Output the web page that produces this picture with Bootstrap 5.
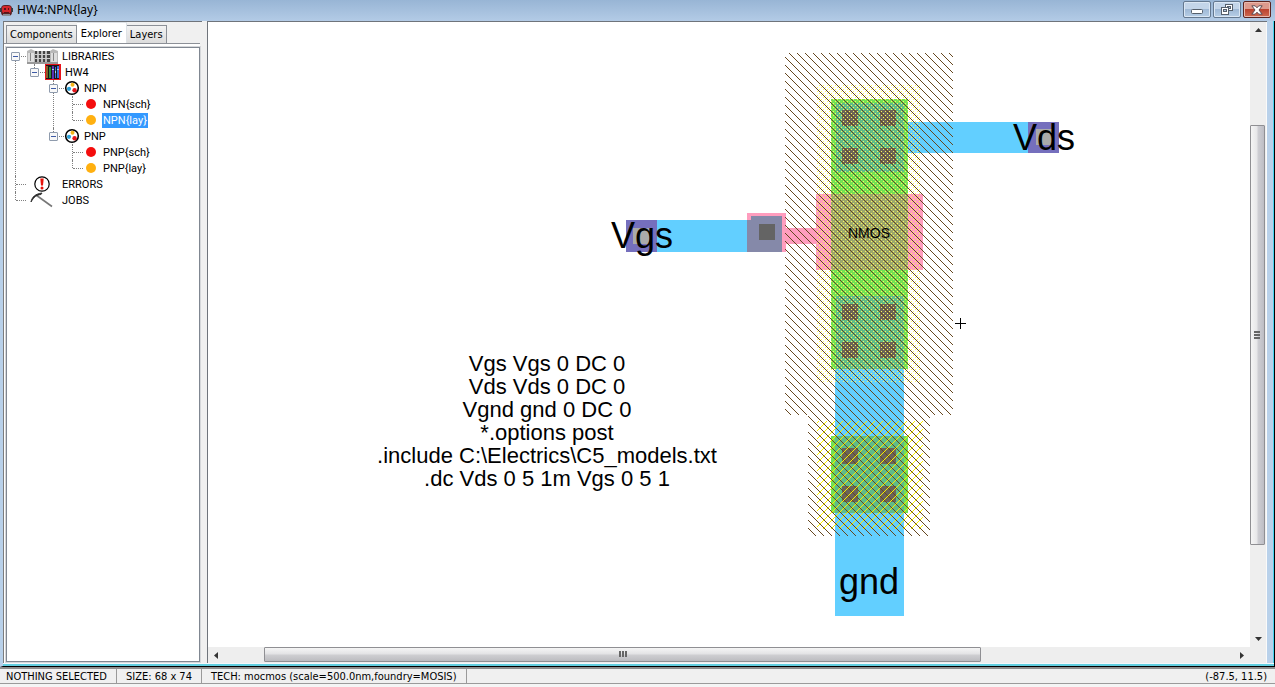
<!DOCTYPE html>
<html lang="en">
<head>
<meta charset="utf-8">
<meta name="viewport" content="width=device-width, initial-scale=1">
<title>HW4:NPN{lay}</title>
<link href="https://cdn.jsdelivr.net/npm/bootstrap@5.3.0/dist/css/bootstrap.min.css" rel="stylesheet">
<style>
  :root { --ui: "DejaVu Sans Condensed", "DejaVu Sans", sans-serif; --face: #f0f0f0; --edge: #808791; }
  body { font: 11px/16px var(--ui); color: #000; background: #fff; }
  button { color: inherit; font: inherit; }
  .fit { min-height: 0; min-width: 0; }

  .titlebar { height: 21px; background: linear-gradient(#98b5d5, #b3cbe6); }
  .titlebar h1 { font: 12px/20px "Noto Sans", sans-serif; }
  .win-btns { gap: 2px; padding-top: 1px; }
  .win-btn { width: 28px; height: 17px; border: 1px solid #64788f; border-radius: 2px; background: linear-gradient(#c3d5e9 45%, #9fb9d6 50%, #b7cee6); box-shadow: inset 0 0 0 1px #dbe7f4; }
  .win-btn.close-win { border-color: #5b2420; background: linear-gradient(#dd9a8d 45%, #bb4330 50%, #cf6a50); box-shadow: inset 0 0 0 1px #e8b9ae; }

  .window-frame { border-left: 3px solid #b9d1ea; border-right: 1px solid #000; border-bottom: 1px solid #000; background: var(--face); }
  .frame-right { width: 7px; background: #b9d1ea; border-right: 1px solid #45d3ee; }
  .frame-bottom { height: 3px; background: #f4f8fb; border-bottom: 2px solid #62cfe0; }

  .side { width: 199px; border-left: 1px solid #7d7d7d; border-top: 1px solid #6f747b; }
  .side .nav-tabs { --bs-nav-tabs-border-width: 0; height: 21px; padding-left: 2px; }
  .side .nav-link { height: 18px; padding: 0 3px; line-height: 17px; color: #000; border: 1px solid #8c9097; border-bottom: 0; border-radius: 0; background: linear-gradient(#f3f3f3, #dcdcdc); margin: 0; }
  .side .nav-link + .nav-link { border-left: 0; }
  .side .nav-link.active { height: 21px; padding: 0 4px; line-height: 19px; color: #000; background: #fff; }
  .side-page { margin-right: 2px; padding: 3px 0 1px 2px; border-top: 1px solid #8c9097; background: #fff; }
  .tree-box { border: 1px solid var(--edge); outline: 1px solid #d5d7da; padding-left: 1px; }

  .tree { font-family: Roboto, "Liberation Sans", sans-serif; }
  .tree ul { margin-left: 19px; }
  .tree li { position: relative; }
  .tree li::before { content: ""; position: absolute; left: 7px; top: 0; bottom: 0; border-left: 1px dotted #808080; }
  .tree li:last-child::before { bottom: auto; height: 8px; }
  .tree > li:first-child::before { top: 8px; }
  .tree-row { height: 16px; }
  .joint { width: 18px; height: 16px; position: relative; flex: none; }
  .joint::before { content: ""; position: absolute; left: 8px; right: 0; top: 8px; border-top: 1px dotted #808080; }
  .joint button { position: absolute; left: 3px; top: 4px; width: 9px; height: 9px; padding: 0; border: 1px solid #8f9bad; border-radius: 1px; background: linear-gradient(90deg, #3d5aa6, #3d5aa6) center / 5px 1px no-repeat #f8f8f8; }
  .tree-row svg { flex: none; margin-right: 3px; }
  .tree-row .wide-icon { margin-left: 1px; }
  .picked { background: #3399ff; color: #fff; }
  .tree-label { padding: 0 1px; line-height: 15px; white-space: nowrap; }

  .pane { border-left: 1px solid #6f747b; border-top: 1px solid #6f747b; background: #fff; min-width: 0; }
  .splitter { width: 5px; }
  .track { background: #eeeeee; }
  .track-v { width: 16px; }
  .track-h { height: 16px; }
  .arrow-btn { width: 16px; height: 16px; border: 0; padding: 0; background: transparent; flex: none; }
  .knob { border: 1px solid #8f8f93; border-radius: 1px; display: flex; align-items: center; justify-content: center; }
  .track-v .knob { background: linear-gradient(90deg, #f5f5f5, #e6e6e8 48%, #cfcfd4 52%, #bdbdc4); margin-right: 1px; }
  .track-h .knob { background: linear-gradient(#f5f5f5, #e2e2e4 48%, #cfcfd2 52%, #bcbcc0); margin-bottom: 1px; }
  .v-before { flex: 87 0 0; } .v-knob { flex: 417 0 0; } .v-after { flex: 86 0 0; }
  .h-before { flex: 40 0 0; } .h-knob { flex: 715 0 0; } .h-after { flex: 253 0 0; }
  .pane-gap { width: 1px; background: #fafafa; }

  .drawing { display: block; min-height: 0; font-family: "Liberation Sans", Arial, sans-serif; }
  .drawing rect, .drawing path { shape-rendering: crispEdges; }
  .t36 { font-size: 36px; } .t22 { font-size: 22px; } .t14 { font-size: 14px; }

  .status { border-top: 2px solid #8c8c8c; border-bottom: 1px solid #9a9a9a; background: var(--face); height: 17px; line-height: 15px; white-space: nowrap; }
  .status span + span { border-left: 1px solid #9a9a9a; }
  .status .cell { padding: 0 9px; }
  .status .cell:first-child { padding-left: 6px; }
  .under-status { height: 3px; background: #f4f4f4; }
</style>
</head>
<body class="vh-100 d-flex flex-column overflow-hidden">

<header class="titlebar d-flex align-items-start pe-1 flex-shrink-0">
  <svg class="mt-1 me-1" width="13" height="13" viewBox="0 0 13 13" aria-hidden="true">
    <rect x="1" y="1" width="11" height="11" rx="4" fill="#5b1f22"/>
    <rect x="2" y="2" width="9" height="7" rx="2" fill="#d3262b"/>
    <path d="M0 4h2v4H0zM11 4h2v4h-2z" fill="#3a3a40"/>
    <path d="M4 4h2v2H4zM8 4h1v2H8zM4 8h5v1H4z" fill="#5b1216"/>
    <path d="M3 10h7v2H3z" fill="#8a8f96"/>
  </svg>
  <h1 class="m-0 flex-grow-1">HW4:NPN{lay}</h1>
  <div class="win-btns d-flex">
    <button class="win-btn p-0 d-flex align-items-center justify-content-center" aria-label="Minimize" type="button">
      <svg class="mt-1" width="12" height="6" viewBox="0 0 12 6"><rect x=".5" y=".5" width="11" height="4" rx="1" fill="#fff" stroke="#555f6b"/></svg>
    </button>
    <button class="win-btn p-0 d-flex align-items-center justify-content-center" aria-label="Restore" type="button">
      <svg width="12" height="11" viewBox="0 0 12 11"><rect x="4.500" y=".5" width="7" height="6" fill="#fff" stroke="#555f6b"/><rect x="6.500" y="2.500" width="3" height="2" fill="#aec4dd" stroke="#555f6b"/><rect x=".5" y="3.500" width="7" height="7" fill="#fff" stroke="#555f6b"/><rect x="2.500" y="5.500" width="3" height="2" fill="#aec4dd" stroke="#555f6b"/></svg>
    </button>
    <button class="win-btn close-win p-0 d-flex align-items-center justify-content-center" aria-label="Close" type="button">
      <svg width="12" height="10" viewBox="0 0 12 10"><path d="M.8.8h3.400L6 2.800 7.800.8h3.400L8 5l3.200 4.200H7.800L6 7.200 4.200 9.200H.8L4 5z" fill="#fff" stroke="#5c4a52"/></svg>
    </button>
  </div>
</header>

<main class="window-frame fit d-flex flex-column flex-grow-1">
  <div class="fit d-flex flex-grow-1">

    <aside class="side d-flex flex-column flex-shrink-0">
      <div class="nav nav-tabs flex-nowrap align-items-end flex-shrink-0" role="tablist">
        <button class="nav-link" role="tab" type="button">Components</button>
        <button class="nav-link active" role="tab" aria-selected="true" type="button">Explorer</button>
        <button class="nav-link" role="tab" type="button">Layers</button>
      </div>
      <div class="side-page flex-grow-1 d-flex flex-column">
        <div class="tree-box flex-grow-1">
          <ul class="tree list-unstyled m-0">
            <li>
              <div class="tree-row d-flex align-items-center"><span class="joint"><button type="button" aria-label="Collapse LIBRARIES"></button></span>
                <svg class="wide-icon" width="31" height="16" viewBox="0 0 31 16"><path d="M0 3l4-2 4 2h15l3-2 5 2v12H0z" fill="#b9b9b9"/><path d="M1 5h6v9H1zM24 5h6v9h-6z" fill="#dedede"/><path d="M3 5h1v8H3zM26 5h1v8h-1z" fill="#888"/><path d="M8 3h2v11H8zM12 3h2v11h-2zM16 3h2v11h-2zM20 3h3v11h-3z" fill="#454545"/><path d="M8 6h15v1H8zM8 10h15v1H8z" fill="#cfcfcf"/><path d="M0 14h31v2H0z" fill="#999"/></svg>
                <span class="tree-label">LIBRARIES</span></div>
              <ul class="list-unstyled mb-0">
                <li>
                  <div class="tree-row d-flex align-items-center"><span class="joint"><button type="button" aria-label="Collapse HW4"></button></span>
                    <svg width="16" height="16" viewBox="0 0 16 16"><path fill="#e8141c" d="M0 0h16v16H0z"/><path fill="#181818" d="M1 1h13v14H1z"/><path fill="#87602a" d="M1 2h2v12H1z"/><path fill="#2d8a43" d="M4 3h2v11H4z"/><path fill="#5b30b8" d="M7 2h2v13H7z"/><path fill="#3a72d8" d="M10 3h1v11h-1zM12 2h2v12h-2z"/><path fill="#a8d6e8" d="M7 5h2v1H7zM10 7h1v2h-1zM12 5h2v1h-2z"/></svg>
                    <span class="tree-label">HW4</span></div>
                  <ul class="list-unstyled mb-0">
                    <li>
                      <div class="tree-row d-flex align-items-center"><span class="joint"><button type="button" aria-label="Collapse NPN"></button></span>
                        <svg width="16" height="16" viewBox="0 0 16 16"><circle cx="8" cy="8" r="6.300" fill="#fff" stroke="#000" stroke-width="1.600"/><circle cx="8.500" cy="4.800" r="2" fill="#f5b51a"/><circle cx="5" cy="8.800" r="2.100" fill="#2a9fd6"/><circle cx="10.600" cy="10.300" r="2.200" fill="#e3161b"/></svg>
                        <span class="tree-label">NPN</span></div>
                      <ul class="list-unstyled mb-0">
                        <li><div class="tree-row d-flex align-items-center"><span class="joint"></span>
                          <svg width="16" height="16" viewBox="0 0 16 16"><circle cx="8" cy="8" r="5" fill="#f40d0d"/></svg>
                          <span class="tree-label">NPN{sch}</span></div></li>
                        <li><div class="tree-row d-flex align-items-center"><span class="joint"></span>
                          <svg width="16" height="16" viewBox="0 0 16 16"><circle cx="8" cy="8" r="5" fill="#ffb010"/></svg>
                          <span class="tree-label picked">NPN{lay}</span></div></li>
                      </ul>
                    </li>
                    <li>
                      <div class="tree-row d-flex align-items-center"><span class="joint"><button type="button" aria-label="Collapse PNP"></button></span>
                        <svg width="16" height="16" viewBox="0 0 16 16"><circle cx="8" cy="8" r="6.300" fill="#fff" stroke="#000" stroke-width="1.600"/><circle cx="8.500" cy="4.800" r="2" fill="#f5b51a"/><circle cx="5" cy="8.800" r="2.100" fill="#2a9fd6"/><circle cx="10.600" cy="10.300" r="2.200" fill="#e3161b"/></svg>
                        <span class="tree-label">PNP</span></div>
                      <ul class="list-unstyled mb-0">
                        <li><div class="tree-row d-flex align-items-center"><span class="joint"></span>
                          <svg width="16" height="16" viewBox="0 0 16 16"><circle cx="8" cy="8" r="5" fill="#f40d0d"/></svg>
                          <span class="tree-label">PNP{sch}</span></div></li>
                        <li><div class="tree-row d-flex align-items-center"><span class="joint"></span>
                          <svg width="16" height="16" viewBox="0 0 16 16"><circle cx="8" cy="8" r="5" fill="#ffb010"/></svg>
                          <span class="tree-label">PNP{lay}</span></div></li>
                      </ul>
                    </li>
                  </ul>
                </li>
              </ul>
            </li>
            <li><div class="tree-row d-flex align-items-center"><span class="joint"></span>
              <svg class="wide-icon" width="31" height="16" viewBox="0 0 31 16"><circle cx="15" cy="8" r="7.200" fill="#fff" stroke="#000" stroke-width="1.200"/><path d="M13.300 2.500h3.400L16 9.500h-2z" fill="#e8140c"/><circle cx="15" cy="12" r="1.500" fill="#e8140c"/></svg>
              <span class="tree-label">ERRORS</span></div></li>
            <li><div class="tree-row d-flex align-items-center"><span class="joint"></span>
              <svg class="wide-icon" width="31" height="16" viewBox="0 0 31 16"><path d="M9 3L25 14.500" stroke="#777" stroke-width="1.600" fill="none"/><path d="M4 10C5 5 8 2 15 1L14 2.500C9 3 7 5 4 10z" fill="#111" stroke="#333"/></svg>
              <span class="tree-label">JOBS</span></div></li>
          </ul>
        </div>
      </div>
    </aside>

    <div class="splitter flex-shrink-0"></div>

    <section class="pane d-flex flex-column flex-grow-1">
      <div class="fit d-flex flex-grow-1">
        <svg class="drawing flex-grow-1" width="100" height="100%" role="img" aria-label="NMOS layout">
          <defs>
            <pattern id="brownHatch" width="8" height="8" patternUnits="userSpaceOnUse"><path fill="#66471f" d="M0 0h1v1H0zM1 1h1v1H1zM2 2h1v1H2zM3 3h1v1H3zM4 4h1v1H4zM5 5h1v1H5zM6 6h1v1H6zM7 7h1v1H7z"/></pattern>
            <pattern id="yellowHatch" width="8" height="8" patternUnits="userSpaceOnUse"><path fill="#f8ee00" d="M7 0h1v1H7zM6 1h1v1H6zM5 2h1v1H5zM4 3h1v1H4zM3 4h1v1H3zM2 5h1v1H2zM1 6h1v1H1zM0 7h1v1H0z"/></pattern>
            <pattern id="yellowDots" width="4" height="4" patternUnits="userSpaceOnUse"><path fill="#fdf65a" d="M3 1h1v1H3zM1 3h1v1H1z"/></pattern>
          </defs>
          <g transform="translate(-208 -22)">
            <!-- metal -->
            <g fill="#62cfff">
              <rect x="904" y="122" width="124" height="31"/>
              <rect x="657" y="220" width="90" height="32"/>
              <rect x="835" y="365" width="69" height="251"/>
            </g>
            <!-- polysilicon -->
            <g fill="#ff9dbe">
              <rect x="747" y="213" width="39" height="39"/>
              <rect x="785" y="228" width="31" height="16"/>
              <rect x="816" y="194" width="107" height="76"/>
            </g>
            <path fill="#8589a9" d="M751 216h31v36h-35v-32h4z"/>
            <!-- active -->
            <g fill="#72e253">
              <rect x="831" y="99" width="77" height="270"/>
              <rect x="831" y="436" width="77" height="77"/>
            </g>
            <rect x="831" y="194" width="77" height="76" fill="#9ba76c"/>
            <g fill="#5fbc88">
              <rect x="836" y="103" width="68" height="69"/>
              <rect x="836" y="296" width="68" height="73"/>
              <rect x="835" y="436" width="69" height="77"/>
            </g>
            <!-- contact cuts -->
            <g fill="#6a6357">
              <rect x="842" y="110" width="16" height="16"/><rect x="880" y="110" width="16" height="16"/>
              <rect x="842" y="148" width="16" height="16"/><rect x="880" y="148" width="16" height="16"/>
              <rect x="842" y="304" width="16" height="16"/><rect x="880" y="304" width="16" height="16"/>
              <rect x="842" y="342" width="16" height="16"/><rect x="880" y="342" width="16" height="16"/>
              <rect x="842" y="448" width="16" height="16"/><rect x="880" y="448" width="16" height="16"/>
              <rect x="842" y="486" width="16" height="16"/><rect x="880" y="486" width="16" height="16"/>
            </g>
            <rect x="759" y="224" width="16" height="16" fill="#646464"/>
            <!-- vias under the exported pins -->
            <g fill="#756fbd"><rect x="626" y="220" width="31" height="32"/><rect x="1028" y="122" width="31" height="31"/></g>
            <g fill="#aaaaaa"><rect x="633" y="228" width="16" height="16"/><rect x="1036" y="129" width="16" height="16"/></g>
            <!-- select and well fills -->
            <path d="M785 53h168v362h-23v121H808V415h-23z" fill="url(#brownHatch)"/>
            <rect x="817" y="84" width="103" height="299" fill="url(#yellowDots)"/>
            <rect x="817" y="421" width="106" height="108" fill="url(#yellowHatch)"/>
            <path d="M955 323h11v1h-11zM960 318h1v11h-1z" fill="#000"/>
            <g class="t36">
              <text x="611" y="248">Vgs</text>
              <text x="1013" y="150">Vds</text>
              <text x="839" y="594">gnd</text>
            </g>
            <text class="t14" x="869" y="238" text-anchor="middle">NMOS</text>
            <g class="t22" text-anchor="middle">
              <text x="547" y="371">Vgs Vgs 0 DC 0</text>
              <text x="547" y="394">Vds Vds 0 DC 0</text>
              <text x="547" y="417">Vgnd gnd 0 DC 0</text>
              <text x="547" y="440">*.options post</text>
              <text x="547" y="463">.include C:\Electrics\C5_models.txt</text>
              <text x="547" y="486">.dc Vds 0 5 1m Vgs 0 5 1</text>
            </g>
          </g>
        </svg>
        <div class="track track-v d-flex flex-column flex-shrink-0">
          <button class="arrow-btn d-flex align-items-center justify-content-center" type="button" aria-label="Scroll up"><svg width="7" height="4" viewBox="0 0 7 4"><path d="M3.500 0L7 4H0z" fill="#333"/></svg></button>
          <div class="v-before"></div>
          <div class="knob v-knob"><svg width="7" height="8" viewBox="0 0 7 8"><path d="M0 0h6v2H0zM0 3h6v2H0zM0 6h6v2H0z" fill="#666"/></svg></div>
          <div class="v-after"></div>
          <button class="arrow-btn d-flex align-items-center justify-content-center" type="button" aria-label="Scroll down"><svg width="7" height="4" viewBox="0 0 7 4"><path d="M0 0h7L3.500 4z" fill="#333"/></svg></button>
        </div>
        <div class="pane-gap"></div>
      </div>
      <div class="d-flex flex-shrink-0">
        <div class="track track-h d-flex flex-grow-1">
          <button class="arrow-btn d-flex align-items-center justify-content-center" type="button" aria-label="Scroll left"><svg width="4" height="7" viewBox="0 0 4 7"><path d="M4 0v7L0 3.500z" fill="#333"/></svg></button>
          <div class="h-before"></div>
          <div class="knob h-knob"><svg width="8" height="7" viewBox="0 0 8 7"><path d="M0 0h2v6H0zM3 0h2v6H3zM6 0h2v6H6z" fill="#666"/></svg></div>
          <div class="h-after"></div>
          <button class="arrow-btn d-flex align-items-center justify-content-center" type="button" aria-label="Scroll right"><svg width="4" height="7" viewBox="0 0 4 7"><path d="M0 0v7l4-3.500z" fill="#333"/></svg></button>
        </div>
        <div class="track track-v"></div>
        <div class="pane-gap"></div>
      </div>
    </section>
    <div class="frame-right flex-shrink-0"></div>
  </div>
  <div class="frame-bottom flex-shrink-0"></div>
</main>

<footer class="flex-shrink-0">
  <div class="status d-flex">
    <span class="cell">NOTHING SELECTED</span>
    <span class="cell">SIZE: 68 x 74</span>
    <span class="cell">TECH: mocmos (scale=500.0nm,foundry=MOSIS)</span>
    <span class="flex-grow-1 text-end pe-2">(-87.5, 11.5)</span>
  </div>
  <div class="under-status"></div>
</footer>

<script src="https://cdn.jsdelivr.net/npm/bootstrap@5.3.0/dist/js/bootstrap.bundle.min.js"></script>
</body>
</html>
